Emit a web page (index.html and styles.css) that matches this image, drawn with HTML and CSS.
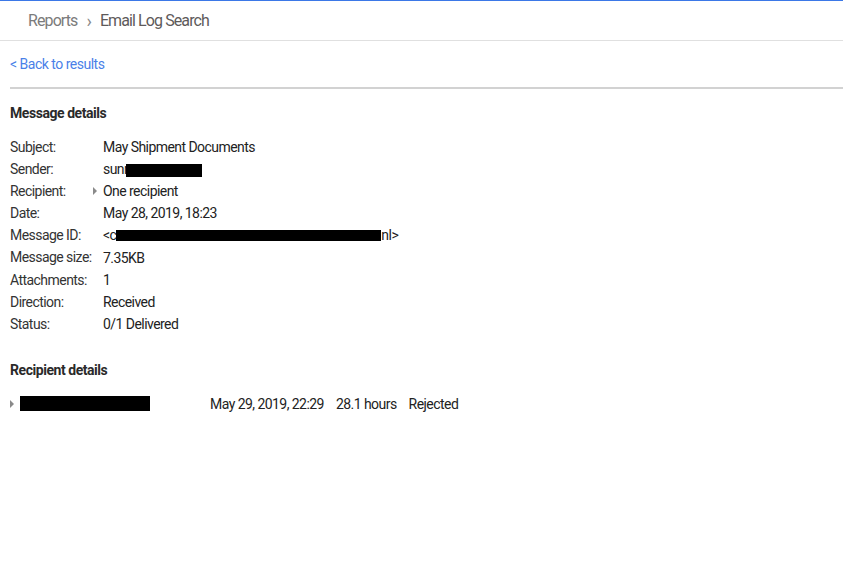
FILE: index.html
```html
<!DOCTYPE html>
<html>
<head>
<meta charset="utf-8">
<link rel="stylesheet" href="styles.css">
</head>
<body>
<div class="topbar"></div>
<header class="crumbs">
  <span class="crumb">Reports</span>
  <span class="crumb-sep">›</span>
  <span class="crumb-current">Email Log Search</span>
</header>
<main class="content">
  <a class="back" href="#">&lt; Back to results</a>
  <div class="rule"></div>
  <h2 class="section-title">Message details</h2>
  <div class="details">
    <div class="label">Subject:</div><div class="value">May Shipment Documents</div>
    <div class="label">Sender:</div><div class="value">sunr<span class="redact redact-sender"></span></div>
    <div class="label">Recipient:</div><div class="value value-exp"><span class="tri"></span>One recipient</div>
    <div class="label">Date:</div><div class="value">May 28, 2019, 18:23</div>
    <div class="label">Message ID:</div><div class="value">&lt;c<span class="redact redact-id"></span>nl&gt;</div>
    <div class="label">Message size:</div><div class="value">7.35KB</div>
    <div class="label">Attachments:</div><div class="value">1</div>
    <div class="label">Direction:</div><div class="value">Received</div>
    <div class="label">Status:</div><div class="value">0/1 Delivered</div>
  </div>
  <h2 class="section-title section-title-2">Recipient details</h2>
  <div class="recip-row">
    <span class="tri tri-row"></span>
    <span class="redact redact-recip"></span>
    <span class="r-date">May 29, 2019, 22:29</span>
    <span class="r-dur">28.1 hours</span>
    <span class="r-status">Rejected</span>
  </div>
</main>
</body>
</html>
```
FILE: styles.css
```css
html, body {
  margin: 0;
  padding: 0;
  background: #ffffff;
}
body {
  font-family: Roboto, "Liberation Sans", sans-serif;
  color: #222222;
  width: 843px;
  height: 567px;
  overflow: hidden;
}
.topbar {
  height: 1px;
  background: #3b78e7;
}
.crumbs {
  display: flex;
  align-items: center;
  height: 38px;
  padding-left: 28px;
  padding-bottom: 1px;
  border-bottom: 1px solid #e0e0e0;
  font-size: 16px;
  letter-spacing: -0.9px;
}
.crumb {
  color: #7b7b7b;
}
.crumb-sep {
  color: #8a8a8a;
  margin: 0 8px 0 9px;
  font-size: 18px;
  letter-spacing: 0;
}
.crumb-current {
  color: #5e5a5a;
}
.content {
  padding: 0 0 0 10px;
}
.back {
  display: block;
  color: #4a7fe8;
  text-decoration: none;
  font-size: 14px;
  letter-spacing: -0.5px;
  line-height: 20px;
  margin-top: 13px;
}
.rule {
  height: 2px;
  background: #d2d2d2;
  margin-top: 13px;
}
.section-title {
  margin: 14px 0 0 0;
  font-size: 14px;
  font-weight: 700;
  line-height: 20px;
  color: #2a2a2a;
  letter-spacing: -0.45px;
}
.details {
  display: grid;
  grid-template-columns: 93px 1fr;
  grid-auto-rows: 22.1px;
  margin-top: 13px;
  font-size: 14px;
  letter-spacing: -0.55px;
  line-height: 22px;
}
.label {
  color: #333333;
}
.value {
  color: #222222;
  display: flex;
  align-items: center;
}
.value-exp {
  position: relative;
}
.tri {
  display: inline-block;
  width: 0;
  height: 0;
  border-top: 4px solid transparent;
  border-bottom: 4px solid transparent;
  border-left: 4px solid #8a8a8a;
}
.value-exp .tri {
  position: absolute;
  left: -10px;
  top: 7px;
}
.redact {
  display: inline-block;
  background: #000000;
}
.redact-sender {
  width: 76px;
  height: 13px;
  margin-left: -2px;
  margin-top: 2px;
}
.redact-id {
  width: 265px;
  height: 11px;
  margin-left: 0;
  margin-top: 1px;
}
.section-title-2 {
  margin-top: 25px;
}
.recip-row {
  display: flex;
  align-items: center;
  margin-top: 13px;
  height: 22px;
  font-size: 14px;
  letter-spacing: -0.55px;
  color: #222222;
}
.tri-row {
  margin-right: 6px;
}
.redact-recip {
  width: 130px;
  height: 15px;
}
.r-date {
  margin-left: 60px;
}
.r-dur {
  margin-left: 12px;
}
.r-status {
  margin-left: 12px;
}
```
